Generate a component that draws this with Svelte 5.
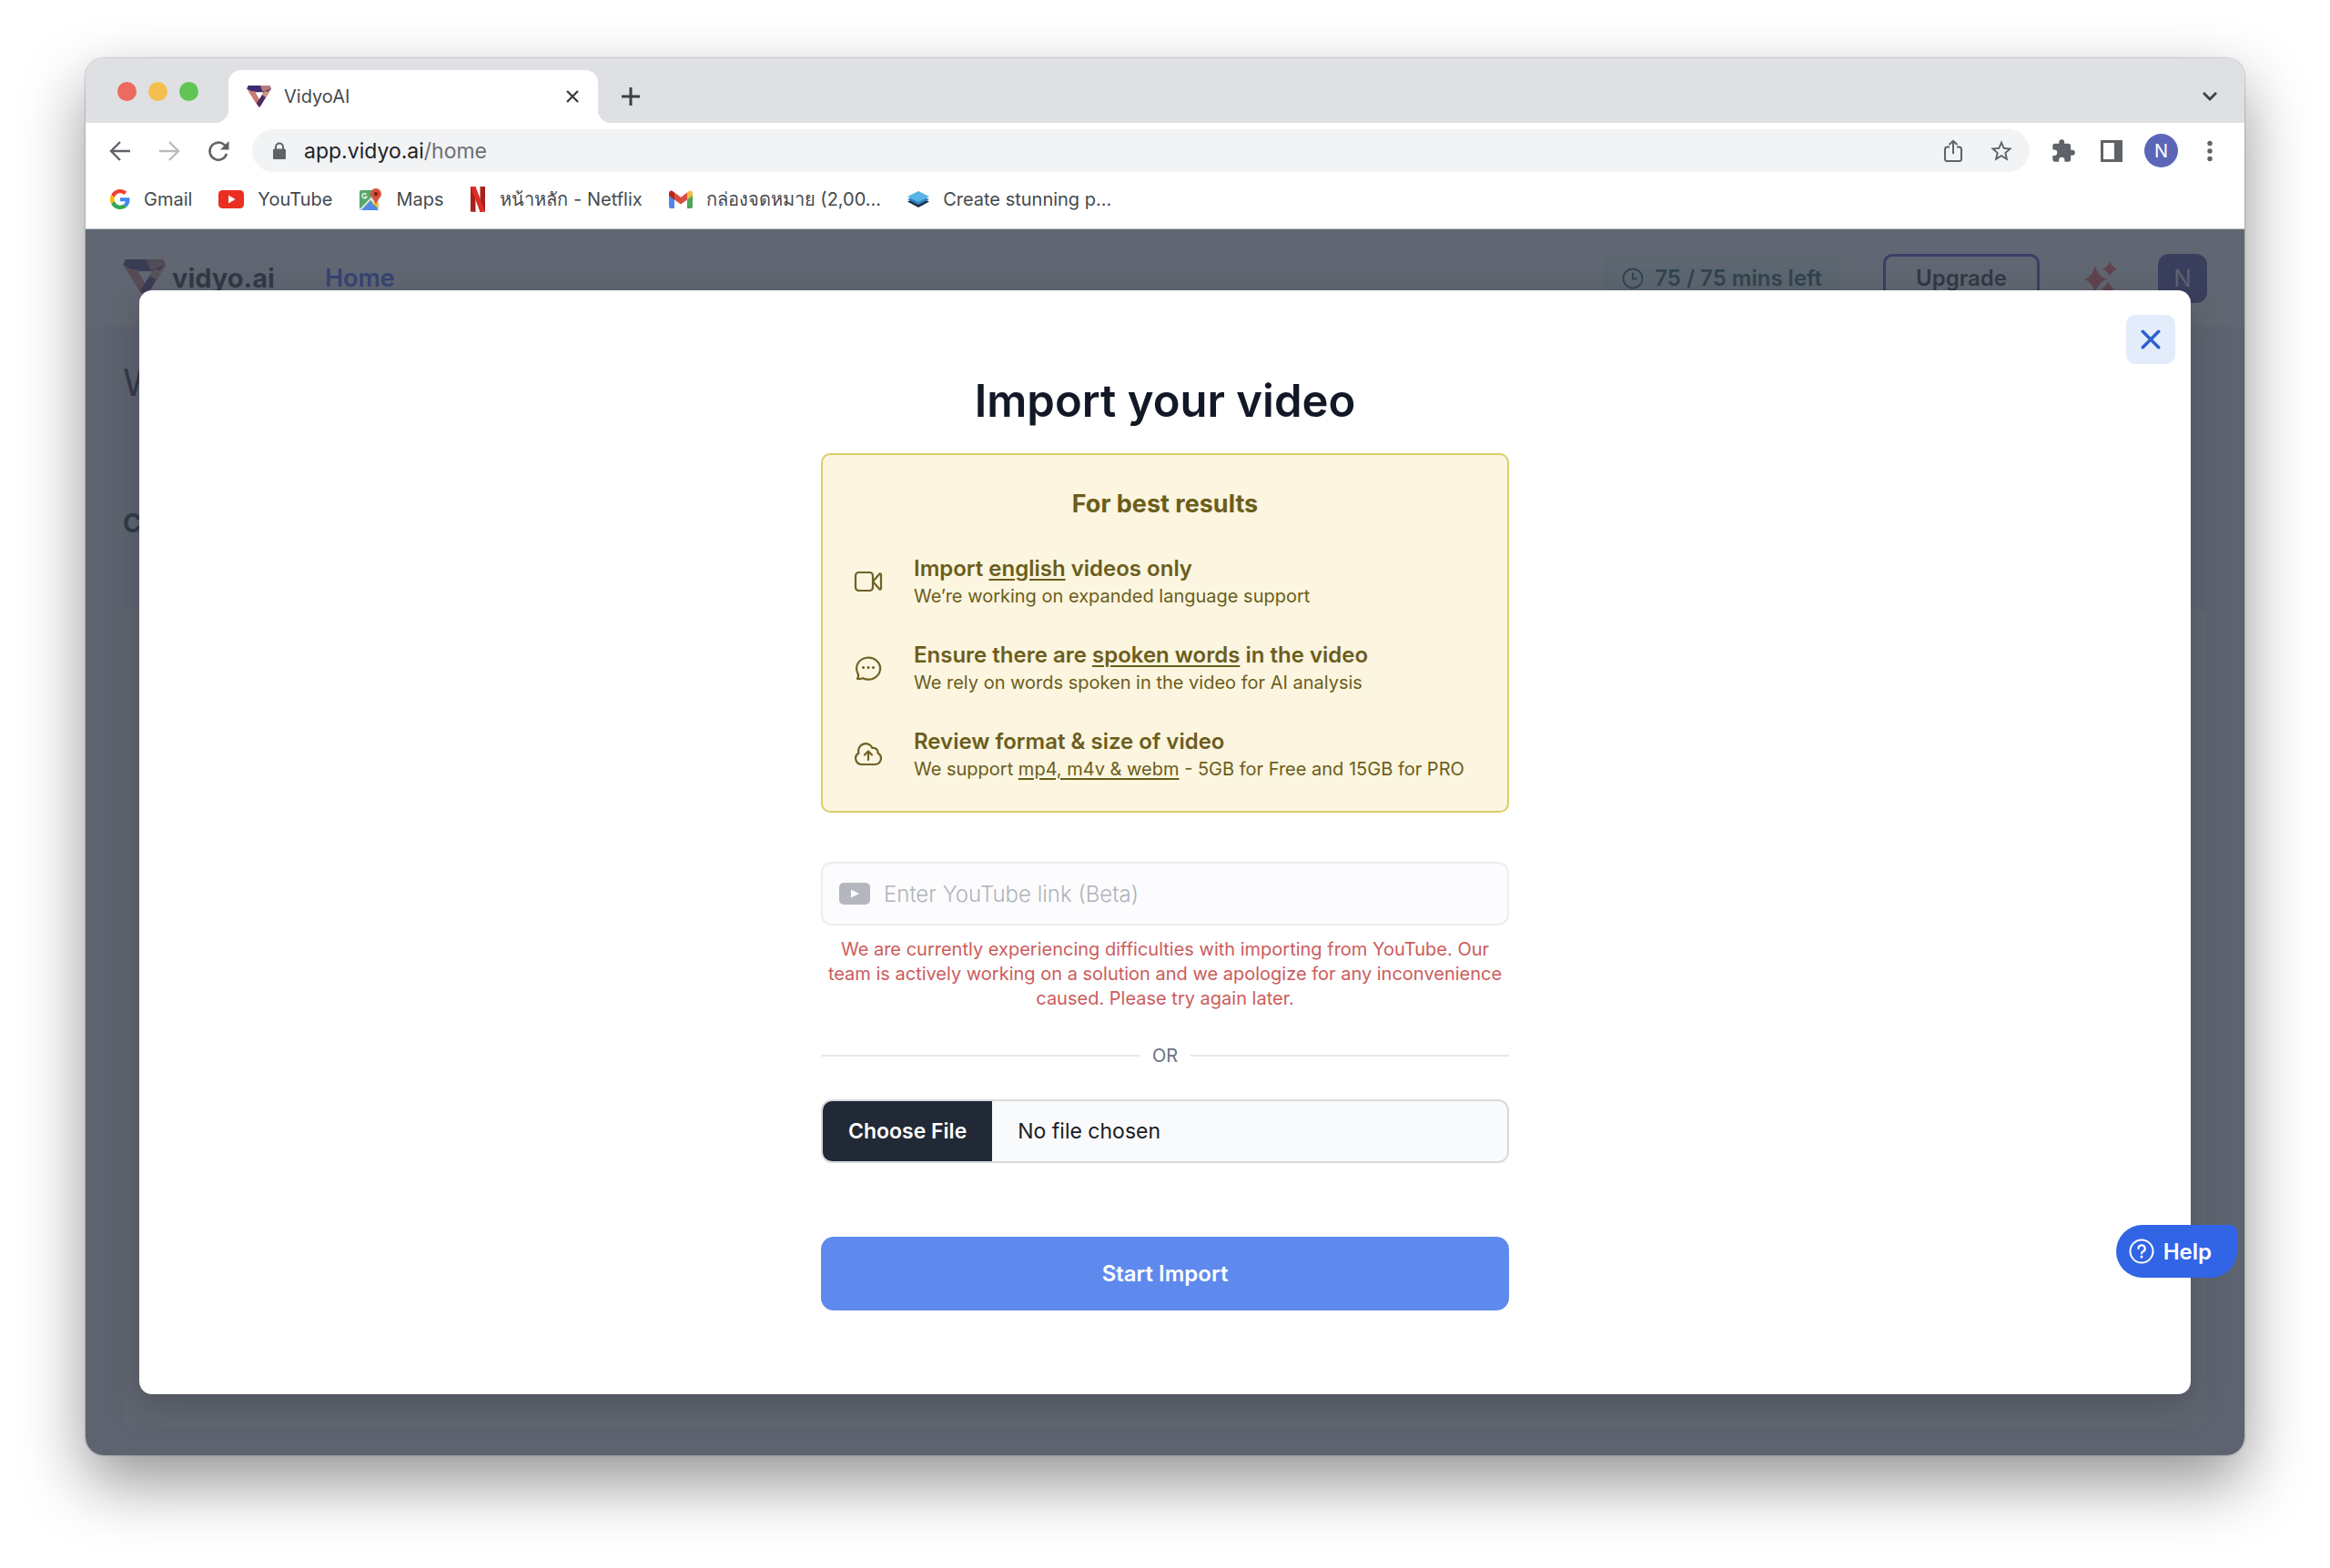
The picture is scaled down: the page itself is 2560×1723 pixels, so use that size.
<script lang="ts">
  const tips = [
    { icon: 'video', pre: 'Import ', mark: 'english', post: ' videos only' },
    { icon: 'chat', pre: 'Ensure there are ', mark: 'spoken words', post: ' in the video' },
    { icon: 'cloud', pre: 'Review format & size of video', mark: '', post: '' }
  ];
</script>

{#snippet logo(cls)}
  <svg class={cls} viewBox="0 0 47 42" aria-hidden="true">
    <path d="M3 0H44L47 6 40 13H12L0 6Z" fill="#3d2a70" />
    <path d="M26 0H44L47 6 40 11H30Z" fill="#b47a7e" />
    <path d="M0 6L8 11H16L28 32 23 42Z" fill="#c97a72" />
    <path d="M47 6L25 42 19 34 34 11Z" fill="#4b2c66" />
    <path d="M34 11L40 12 47 6 37 23 30 18Z" fill="#d39680" />
    <path d="M17 13H31L24 26Z" fill="#fff" />
  </svg>
{/snippet}

<div class="desktop">
  <div class="window">
    <div class="tabstrip">
      <div class="lights"><i class="red"></i><i class="amber"></i><i class="green"></i></div>
      <div class="tab">
        {@render logo('favicon')}
        <span class="tab-title">VidyoAI</span>
        <button class="bare" aria-label="Close tab">
          <svg width="16" height="16" viewBox="0 0 16 16"><path d="M2 2L14 14M14 2L2 14" stroke="#3c4043" stroke-width="2.4" /></svg>
        </button>
      </div>
      <button class="bare plus" aria-label="New tab">
        <svg width="22" height="22" viewBox="0 0 22 22"><path d="M11 1V21M1 11H21" stroke="#3c4043" stroke-width="3" /></svg>
      </button>
      <button class="bare chevron" aria-label="Search tabs">
        <svg width="18" height="12" viewBox="0 0 18 12"><path d="M2 2L9 9L16 2" fill="none" stroke="#3c4043" stroke-width="2.8" /></svg>
      </button>
    </div>

    <div class="toolbar">
      <nav class="nav-buttons" aria-label="Browser">
        <button class="bare" aria-label="Back"><svg width="24" height="24" viewBox="0 0 24 24"><path d="M23 12H3M12 2L2 12L12 22" fill="none" stroke="#5f6368" stroke-width="2.4" /></svg></button>
        <button class="bare" aria-label="Forward"><svg width="24" height="24" viewBox="0 0 24 24"><path d="M1 12H21M12 2L22 12L12 22" fill="none" stroke="#b9bbbe" stroke-width="2.4" /></svg></button>
        <button class="bare" aria-label="Reload"><svg width="24" height="24" viewBox="0 0 24 24"><path d="M21 15A9.500 9.500 0 1 1 18.500 5.200L21 8" fill="none" stroke="#5f6368" stroke-width="2.5" /><path d="M23.500 1V10.500H14Z" fill="#5f6368" /></svg></button>
      </nav>
      <div class="omnibox">
        <svg width="16" height="20" viewBox="0 0 16 20"><path d="M4 9V5.500a4 4 0 0 1 8 0V9" fill="none" stroke="#5f6368" stroke-width="2" /><rect x="1" y="7.500" width="14" height="11.500" rx="1.500" fill="#5f6368" /></svg>
        <span class="url">app.vidyo.ai<em>/home</em></span>
        <button class="bare" aria-label="Share"><svg width="22" height="26" viewBox="0 0 22 26"><path d="M7 8.500H4.500A2.500 2.500 0 0 0 2 11V21.500A2.500 2.500 0 0 0 4.500 24H17.500A2.500 2.500 0 0 0 20 21.500V11A2.500 2.500 0 0 0 17.500 8.500H15M11 16V2M6.500 6L11 1.800L15.500 6" fill="none" stroke="#5f6368" stroke-width="2" /></svg></button>
        <button class="bare" aria-label="Bookmark"><svg width="26" height="26" viewBox="1 1 22 22"><path d="M22 9.240l-7.190-.620L12 2 9.190 8.630 2 9.240l5.460 4.730L5.820 21 12 17.270 18.180 21l-1.630-7.030L22 9.240zM12 15.400l-3.760 2.270 1-4.280-3.320-2.880 4.380-.380L12 6.100l1.710 4.040 4.380.380-3.320 2.880 1 4.280L12 15.400z" fill="#5f6368" /></svg></button>
      </div>
      <div class="tools">
        <button class="bare" aria-label="Extensions"><svg width="28" height="28" viewBox="0 0 24 24"><path d="M20.500 11H19V7c0-1.100-.9-2-2-2h-4V3.500a2.500 2.500 0 0 0-5 0V5H4c-1.100 0-2 .9-2 2v3.800h1.500a2.700 2.700 0 0 1 0 5.400H2V20c0 1.100.9 2 2 2h3.800v-1.500a2.700 2.700 0 0 1 5.400 0V22H17c1.100 0 2-.9 2-2v-4h1.500a2.500 2.500 0 0 0 0-5z" fill="#5f6368" /></svg></button>
        <button class="bare" aria-label="Side panel"><svg width="24" height="24" viewBox="0 0 24 24"><path d="M0 0H24V24H0ZM3 3V21H15V3Z" fill="#5f6368" fill-rule="evenodd" /></svg></button>
        <button class="bare profile" aria-label="Profile">N</button>
        <button class="bare" aria-label="Menu"><svg width="6" height="24" viewBox="0 0 6 24"><g fill="#5f6368"><circle cx="3" cy="3.500" r="2.700" /><circle cx="3" cy="12" r="2.700" /><circle cx="3" cy="20.500" r="2.700" /></g></svg></button>
      </div>
    </div>

    <nav class="bookmarks" aria-label="Bookmarks">
      <a href="#gmail"><svg width="22" height="22" viewBox="0 0 48 48"><path fill="#EA4335" d="M24 9.500c3.540 0 6.710 1.220 9.210 3.600l6.850-6.850C35.900 2.380 30.470 0 24 0 14.620 0 6.510 5.380 2.560 13.220l7.980 6.190C12.430 13.720 17.740 9.500 24 9.500z" /><path fill="#4285F4" d="M46.980 24.550c0-1.570-.15-3.090-.38-4.550H24v9.020h12.940c-.58 2.960-2.260 5.480-4.780 7.180l7.730 6c4.510-4.180 7.090-10.360 7.090-17.650z" /><path fill="#FBBC05" d="M10.530 28.590a14.500 14.500 0 0 1 0-9.180l-7.980-6.190a24 24 0 0 0 0 21.560l7.980-6.190z" /><path fill="#34A853" d="M24 48c6.480 0 11.930-2.130 15.890-5.810l-7.730-6c-2.150 1.450-4.920 2.300-8.160 2.300-6.260 0-11.570-4.220-13.470-9.910l-7.980 6.190C6.510 42.620 14.620 48 24 48z" /></svg>Gmail</a>
      <a href="#youtube"><svg width="28" height="20" viewBox="0 0 28 20"><rect width="28" height="20" rx="4.500" fill="#ea2f22" /><path d="M11 5.500L18.500 10L11 14.500Z" fill="#fff" /></svg>YouTube</a>
      <a href="#maps"><svg width="26" height="26" viewBox="0 0 26 26"><path d="M1 5a2 2 0 0 1 2-2H21V23a2 2 0 0 1-2 2H3a2 2 0 0 1-2-2Z" fill="#55a869" /><path d="M1 24L20 4L22 12L23 24L13 14L3 25Z" fill="#dfe1e5" /><path d="M15 18L21 12L22 22Z" fill="#f1c34c" /><path d="M3 25L12.500 15.500L22 25Z" fill="#5387ea" /><path d="M19 1a6 6 0 0 1 6 6c0 4-4 5-6 12c-2-7-6-8-6-12a6 6 0 0 1 6-6Z" fill="#d85040" /><circle cx="19" cy="7" r="2.200" fill="#7d1f16" /><path d="M8.500 7.500A2.600 2.600 0 1 0 9 10H6.500" fill="none" stroke="#fff" stroke-width="1.200" /></svg>Maps</a>
      <a href="#netflix"><svg width="18" height="28" viewBox="0 0 18 28"><path d="M1 0H6.500V28L1 27.500ZM11.500 0H17V27.500L11.500 28Z" fill="#a8201c" /><path d="M1 0H6.500L17 27.500L11.500 28Z" fill="#dd2c27" /></svg>หน้าหลัก - Netflix</a>
      <a href="#mail"><svg width="26" height="20" viewBox="0 0 26 20"><path d="M0 4L6 8V20H2A2 2 0 0 1 0 18Z" fill="#4f86ec" /><path d="M26 4L20 8V20H24A2 2 0 0 0 26 18Z" fill="#4ba55b" /><path d="M20 2.500L22 1a2.500 2.500 0 0 1 4 2V6L20 10.500Z" fill="#f2bd42" /><path d="M6 2.500L4 1a2.500 2.500 0 0 0-4 2V6L6 10.500Z" fill="#b6281e" /><path d="M6 2.500L13 7.800L20 2.500V10.500L13 15.500L6 10.500Z" fill="#d94f3f" /></svg>กล่องจดหมาย (2,00...</a>
      <a href="#buffer"><svg width="24" height="18" viewBox="0 0 24 18"><path d="M12 6L24 11.500L12 18L0 11.500Z" fill="#1e3145" /><path d="M12 3.500L24 9L12 15L0 9Z" fill="#3384c4" /><path d="M12 0L24 6L12 12L0 6Z" fill="#57b5e6" /></svg>Create stunning p...</a>
    </nav>

    <div class="viewport">
      <div class="page">
        <header>
          {@render logo('brand-mark')}
          <strong class="brand">vidyo.ai</strong>
          <a class="home" href="#home">Home</a>
          <span class="quota"><svg width="24" height="24" viewBox="0 0 24 24" fill="none" stroke="#0c4a42" stroke-width="1.800"><circle cx="12" cy="12" r="10.500" /><path d="M12 5.500V12.500H16.500" /></svg>75 / 75 mins left</span>
          <button class="upgrade">Upgrade</button>
          <svg class="spark" width="36" height="38" viewBox="0 0 36 38" fill="#f4504a"><path d="M12 5Q15 17 25 20Q15 23 12 35Q9 23 0 20Q9 17 12 5Z" /><path d="M28 0Q30 6 36 8.500Q30 11 28 17Q26 11 20 8.500Q26 6 28 0Z" /><path d="M26 22Q28 28 33 30Q28 32 26 38Q24 32 19 30Q24 28 26 22Z" /></svg>
          <span class="rule"></span>
          <button class="user">N</button>
        </header>
        <main>
          <h2>Welcome</h2>
          <h3>Create</h3>
          <section class="card"></section>
        </main>
      </div>

      <div class="overlay">
        <div class="modal" role="dialog" aria-modal="true" aria-labelledby="import-title">
          <button class="close" aria-label="Close"><svg width="22" height="22" viewBox="0 0 24 24"><path d="M2.500 2.500L21.500 21.500M21.500 2.500L2.500 21.500" stroke="#2f5fd0" stroke-width="3.800" stroke-linecap="round" /></svg></button>
          <form class="column" onsubmit={(e) => e.preventDefault()}>
            <h1 id="import-title">Import your video</h1>
            <section class="tips">
              <h2>For best results</h2>
              <ul>
                {#each tips as t}
                  <li>
                    <svg width="32" height="32" viewBox="0 0 32 32" fill="none" stroke="#6f6228" stroke-width="2.200" stroke-linejoin="round" stroke-linecap="round">
                      {#if t.icon === 'video'}
                        <rect x="2" y="5" width="19" height="20" rx="3.500" /><path d="M21 15L28.500 6.500A1 1 0 0 1 30 7.300V22.700A1 1 0 0 1 28.500 23.500Z" />
                      {:else if t.icon === 'chat'}
                        <path d="M4.500 21A13 12 0 1 1 10 26.200Q8 27.500 4 27Q6 24.500 4.500 21Z" /><path d="M10.500 14.500H10.600M16 14.500H16.100M21.500 14.500H21.600" stroke-width="3" />
                      {:else}
                        <path d="M9 26A6.700 6.700 0 0 1 5.500 13.500A8 8 0 0 1 20.500 8A4.800 4.800 0 0 1 26.500 13.500A6.700 6.700 0 0 1 24 26Z" /><path d="M16 21V12M12 15.500L16 11.500L20 15.500" />
                      {/if}
                    </svg>
                    <div>
                      <h3>{t.pre}{#if t.mark}<u>{t.mark}</u>{/if}{t.post}</h3>
                      {#if t.icon === 'video'}
                        <p>We’re working on expanded language support</p>
                      {:else if t.icon === 'chat'}
                        <p>We rely on words spoken in the video for AI analysis</p>
                      {:else}
                        <p>We support <u>mp4, m4v &amp; webm</u> - 5GB for Free and 15GB for PRO</p>
                      {/if}
                    </div>
                  </li>
                {/each}
              </ul>
            </section>
            <label class="link-field">
              <svg width="34" height="24" viewBox="0 0 34 24"><rect width="34" height="24" rx="5" fill="#b4b7be" /><path d="M13 7.500L22 12L13 16.500Z" fill="#fff" /></svg>
              <input type="text" placeholder="Enter YouTube link (Beta)" aria-label="YouTube link" />
            </label>
            <p class="error">We are currently experiencing difficulties with importing from YouTube. Our team is actively working on a solution and we apologize for any inconvenience caused. Please try again later.</p>
            <div class="or"><span>OR</span></div>
            <input class="file" type="file" aria-label="Video file" />
            <button class="start" type="submit">Start Import</button>
          </form>
        </div>
      </div>
      <button class="help"><svg width="28" height="28" viewBox="0 0 28 28" fill="none" stroke="#fff" stroke-width="2"><circle cx="14" cy="14" r="12.500" /><path d="M10.500 11A3.600 3.600 0 1 1 15.500 14.300Q14 15 14 16.500" stroke-width="2.200" stroke-linecap="round" /><circle cx="14" cy="20" r="1.500" fill="#fff" stroke="none" /></svg>Help</button>
    </div>
  </div>
</div>

<style>
  :global(body) { margin: 0; background: #fff; }
  * { box-sizing: border-box; }
  h1, h2, h3, p, ul { margin: 0; padding: 0; }
  svg { display: block; flex: none; }
  button, input { font: inherit; }
  .desktop { min-height: 100vh; display: flex; padding: 64px 94px 125px; font-family: Inter, 'Noto Sans', sans-serif; }
  .window { flex: 1; min-width: 0; display: flex; flex-direction: column; border-radius: 20px; overflow: hidden; background: #fff; box-shadow: 0 0 2px rgba(0, 0, 0, .5), 0 30px 70px rgba(0, 0, 0, .42); }
  .bare { border: 0; padding: 0; background: none; display: flex; align-items: center; justify-content: center; }

  .tabstrip { height: 71px; background: #dee0e4; display: flex; align-items: center; padding: 13px 29px 0 35px; }
  .lights { display: flex; gap: 13px; margin: 0 33px 12px 0; }
  .lights i { width: 21px; height: 21px; border-radius: 50%; }
  .red { background: #ed6a5e; }
  .amber { background: #f5bf4f; }
  .green { background: #61c554; }
  .tab { position: relative; align-self: stretch; width: 406px; background: #fff; border-radius: 14px 14px 0 0; display: flex; align-items: center; padding: 0 20px; }
  .tab::before, .tab::after { content: ''; position: absolute; bottom: 0; width: 14px; height: 14px; }
  .tab::before { right: 100%; background: radial-gradient(circle at 0 0, transparent 14px, #fff 14px); }
  .tab::after { left: 100%; background: radial-gradient(circle at 100% 0, transparent 14px, #fff 14px); }
  .favicon { width: 27px; height: 24px; margin-right: 14px; }
  .tab-title { flex: 1; font-size: 20px; color: #45494d; }
  .plus { margin-left: 25px; }
  .chevron { margin-left: auto; }

  .toolbar { display: flex; align-items: center; height: 61px; padding: 0 35px 0 26px; }
  .nav-buttons { display: flex; gap: 30px; margin-right: 25px; }
  .omnibox { flex: 1; height: 47px; border-radius: 24px; background: #f1f3f4; display: flex; align-items: center; gap: 29px; padding: 0 18px 0 22px; }
  .url { flex: 1; margin-left: -10px; font-size: 23px; color: #202124; }
  .url em { font-style: normal; color: #6b6f74; }
  .tools { display: flex; align-items: center; gap: 27px; margin-left: 23px; }
  .profile { width: 37px; height: 37px; border-radius: 50%; background: #5c66b8; color: #fff; font-size: 20px; }
  .tools .profile { margin: 0 5px 0 -3px; }

  .bookmarks { display: flex; align-items: center; gap: 29px; height: 56px; padding: 0 27px 10px; border-bottom: 1px solid #c3c6ca; }
  .bookmarks a { display: flex; align-items: center; gap: 15px; font-size: 20px; line-height: 28px; color: #45494d; text-decoration: none; white-space: nowrap; }

  .viewport { flex: 1; display: grid; position: relative; }
  .page, .overlay { grid-area: 1 / 1; }
  .page { background: #e8e9f1; display: flex; flex-direction: column; color: #111827; }
  header { height: 107px; background: #fff; display: flex; align-items: center; padding: 0 41px; }
  .brand-mark { width: 47px; height: 42px; margin-right: 7px; }
  .brand { font-size: 29px; font-weight: 700; margin-right: 55px; }
  .home { flex: 1; font-size: 27px; font-weight: 600; color: #2450ff; text-decoration: none; }
  .quota { height: 48px; display: flex; align-items: center; gap: 12px; padding: 0 20px 0 22px; margin-right: 47px; border-radius: 8px; background: #e0f7f4; color: #134e4a; font-size: 24px; font-weight: 600; }
  .upgrade { width: 172px; height: 54px; border: 3px solid #4030d0; border-radius: 10px; background: none; color: #111827; font-size: 24px; font-weight: 600; }
  .spark { margin: 0 22px 0 49px; }
  .rule { width: 2px; height: 54px; background: #f0f1f5; margin-right: 21px; }
  .user { width: 54px; height: 54px; border: 0; border-radius: 12px; background: #3f389c; color: #e5e7eb; font-size: 26px; padding: 0; }
  main { flex: 1; display: flex; flex-direction: column; padding: 36px 41px 28px; }
  main h2 { font-size: 41px; line-height: 50px; font-weight: 400; }
  main h3 { font-size: 28px; line-height: 36px; font-weight: 700; margin: 112px 0 76px; }
  .card { flex: 1; border-radius: 12px; background: #f8f9fa; }

  .overlay { background: rgba(57, 65, 79, .8); padding: 67px 59px; }
  .modal { position: relative; background: #fff; border-radius: 14px; box-shadow: 0 12px 36px rgba(40, 40, 50, .3); padding: 86px 40px 92px; }
  .close { position: absolute; top: 27px; right: 17px; width: 54px; height: 54px; border: 0; padding: 0; border-radius: 10px; background: #e2ecfb; display: grid; place-items: center; }
  .column { max-width: 756px; margin: 0 auto; display: flex; flex-direction: column; }
  h1 { font-size: 49px; line-height: 72px; font-weight: 600; text-align: center; color: #131827; }
  .tips { margin-top: 21px; border: 2px solid #dacd68; border-radius: 10px; background: #fcf5df; color: #6b5d1c; padding: 36px 34px 31px; }
  .tips h2 { text-align: center; font-size: 27px; line-height: 36px; font-weight: 700; }
  .tips ul { list-style: none; margin-top: 38px; display: grid; gap: 35px; }
  .tips li { display: flex; align-items: center; gap: 34px; }
  .tips h3 { font-size: 24px; line-height: 30px; font-weight: 600; }
  .tips p { font-size: 20px; line-height: 30px; }
  u { text-underline-offset: 3px; text-decoration-thickness: 2px; }
  .link-field { margin-top: 54px; height: 70px; display: flex; align-items: center; gap: 15px; padding: 0 18px; border: 2px solid #ebedf0; border-radius: 12px; background: #fcfcfe; }
  .link-field input { flex: 1; min-width: 0; border: 0; padding: 0; background: none; outline: 0; font-size: 24px; font-weight: 300; }
  .link-field input::placeholder { color: #b0b3ba; opacity: 1; }
  .error { margin-top: 13px; font-size: 20px; line-height: 27px; text-align: center; color: #cb5c5c; }
  .or { display: flex; align-items: center; gap: 14px; margin-top: 34px; font-size: 20px; line-height: 30px; color: #6b7280; }
  .or::before, .or::after { content: ''; flex: 1; height: 2px; background: #e5e7eb; }
  .file { margin-top: 33px; width: 100%; height: 70px; border: 2px solid #d7dadd; border-radius: 12px; background: #f9fafc; color: #181c26; font-size: 23px; line-height: 66px; overflow: hidden; }
  .file::file-selector-button { height: 66px; margin: 0 28px 0 0; padding: 0 28px; border: 0; background: #212936; color: #fff; font: inherit; font-weight: 600; }
  .start { margin-top: 81px; height: 81px; border: 0; border-radius: 14px; background: #5f8aed; color: #fff; font-size: 24px; font-weight: 600; }
  .help { position: absolute; right: 8px; bottom: 195px; height: 58px; display: flex; align-items: center; gap: 10px; padding: 0 28px 0 14px; border: 0; border-radius: 29px 8px 29px 29px; background: #3264e6; color: #fff; font-size: 24px; font-weight: 600; }
</style>
